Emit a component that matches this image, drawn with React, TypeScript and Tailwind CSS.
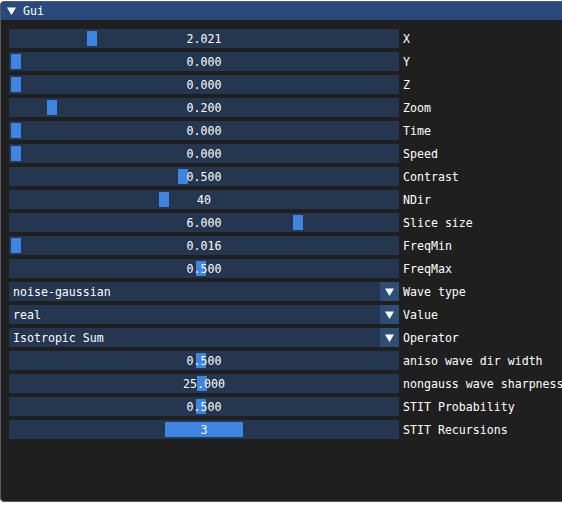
import React from "react";

type Row =
  | { kind: "slider"; label: string; value: string; grab: number; grabW?: number }
  | { kind: "combo"; label: string; value: string };

const rows: Row[] = [
  { kind: "slider", label: "X", value: "2.021", grab: 87 },
  { kind: "slider", label: "Y", value: "0.000", grab: 11 },
  { kind: "slider", label: "Z", value: "0.000", grab: 11 },
  { kind: "slider", label: "Zoom", value: "0.200", grab: 47 },
  { kind: "slider", label: "Time", value: "0.000", grab: 11 },
  { kind: "slider", label: "Speed", value: "0.000", grab: 11 },
  { kind: "slider", label: "Contrast", value: "0.500", grab: 178 },
  { kind: "slider", label: "NDir", value: "40", grab: 159 },
  { kind: "slider", label: "Slice size", value: "6.000", grab: 293 },
  { kind: "slider", label: "FreqMin", value: "0.016", grab: 11 },
  { kind: "slider", label: "FreqMax", value: "0.500", grab: 196 },
  { kind: "combo", label: "Wave type", value: "noise-gaussian" },
  { kind: "combo", label: "Value", value: "real" },
  { kind: "combo", label: "Operator", value: "Isotropic Sum" },
  { kind: "slider", label: "aniso wave dir width", value: "0.500", grab: 196 },
  { kind: "slider", label: "nongauss wave sharpness", value: "25.000", grab: 197 },
  { kind: "slider", label: "STIT Probability", value: "0.500", grab: 196 },
  { kind: "slider", label: "STIT Recursions", value: "3", grab: 165, grabW: 78 },
];

function Slider({ value, grab, grabW }: { value: string; grab: number; grabW?: number }) {
  return (
    <div className="relative w-[390px] h-[19px] bg-[#243650] shrink-0">
      <div
        className="absolute top-[2px] h-[15px] bg-[#3d85e0]"
        style={{ left: grab - 9, width: grabW ?? 10 }}
      />
      <div className="relative h-full flex items-center justify-center text-white pt-[2px]">{value}</div>
    </div>
  );
}

function Combo({ value }: { value: string }) {
  return (
    <div className="flex w-[390px] h-[19px] shrink-0">
      <div className="flex-1 bg-[#243650] flex items-center pl-[4px] pt-[2px] text-white">{value}</div>
      <div className="w-[19px] h-[19px] bg-[#2d4f77] flex items-center justify-center">
        <svg width="9" height="8" viewBox="0 0 9 8">
          <polygon points="0,0.5 9,0.5 4.5,8" fill="#ffffff" />
        </svg>
      </div>
    </div>
  );
}

export default function App() {
  return (
    <div className="w-[562px] h-[528px] bg-white overflow-hidden pt-px font-['DejaVu_Sans_Mono',monospace] text-[11.6px] leading-none">
      <div className="w-[600px] h-[501px] bg-[#1f1f1f] border border-[#5a5a66] rounded-[4px] overflow-hidden flex flex-col">
        <div className="h-[18px] bg-[#294a7a] flex items-center pl-[6px] gap-[7px] text-white shrink-0">
          <svg width="9" height="8" viewBox="0 0 9 8">
            <polygon points="0,0.5 9,0.5 4.5,8" fill="#ffffff" />
          </svg>
          <span className="pt-[2px]">Gui</span>
        </div>
        <div className="flex flex-col gap-[4px] pl-[8px] pt-[9px]">
          {rows.map((r) => (
            <div key={r.label} className="flex items-center gap-[4px] h-[19px]">
              {r.kind === "slider" ? (
                <Slider value={r.value} grab={r.grab} grabW={r.grabW} />
              ) : (
                <Combo value={r.value} />
              )}
              <span className="text-white whitespace-nowrap pt-[2px]">{r.label}</span>
            </div>
          ))}
        </div>
      </div>
    </div>
  );
}
